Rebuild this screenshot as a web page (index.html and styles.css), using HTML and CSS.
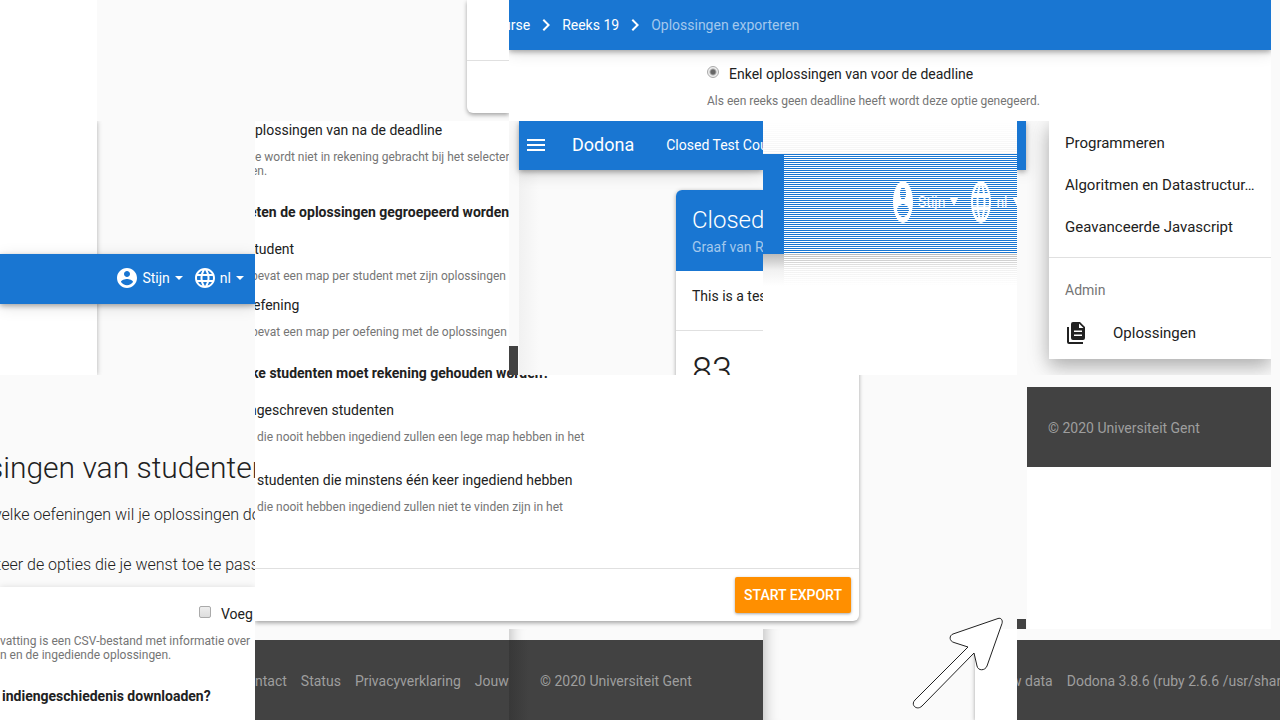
FILE: index.html
```html
<!DOCTYPE html>
<html lang="nl">
<head>
<meta charset="utf-8">
<title>Dodona</title>
<link rel="stylesheet" href="styles.css">
</head>
<body>
<svg class="defs" aria-hidden="true">
  <symbol id="account" viewBox="2 2 20 20"><path d="M12 2C6.48 2 2 6.48 2 12s4.48 10 10 10 10-4.48 10-10S17.52 2 12 2zm0 3c1.66 0 3 1.34 3 3s-1.34 3-3 3-3-1.34-3-3 1.34-3 3-3zm0 14.2c-2.5 0-4.71-1.28-6-3.22.03-1.99 4-3.08 6-3.08 1.99 0 5.97 1.09 6 3.08-1.29 1.94-3.5 3.22-6 3.22z"/></symbol>
  <symbol id="globe" viewBox="2 2 20 20"><path d="M11.99 2C6.47 2 2 6.48 2 12s4.47 10 9.99 10C17.52 22 22 17.52 22 12S17.52 2 11.99 2zm6.93 6h-2.95c-.32-1.25-.78-2.45-1.38-3.56 1.84.63 3.37 1.91 4.33 3.56zM12 4.04c.83 1.2 1.48 2.53 1.91 3.96h-3.82c.43-1.43 1.08-2.76 1.91-3.96zM4.26 14C4.1 13.36 4 12.69 4 12s.1-1.36.26-2h3.38c-.08.66-.14 1.32-.14 2s.06 1.34.14 2H4.26zm.82 2h2.95c.32 1.25.78 2.45 1.38 3.56-1.84-.63-3.37-1.9-4.33-3.56zm2.95-8H5.08c.96-1.66 2.49-2.93 4.33-3.56C8.81 5.55 8.35 6.75 8.03 8zM12 19.96c-.83-1.2-1.48-2.53-1.91-3.96h3.82c-.43 1.43-1.08 2.76-1.91 3.96zM14.34 14H9.66c-.09-.66-.16-1.32-.16-2s.07-1.35.16-2h4.68c.09.65.16 1.32.16 2s-.07 1.34-.16 2zm.25 5.56c.6-1.11 1.06-2.31 1.38-3.56h2.95c-.96 1.65-2.49 2.93-4.33 3.56zM16.36 14c.08-.66.14-1.32.14-2s-.06-1.34-.14-2h3.38c.16.64.26 1.31.26 2s-.1 1.36-.26 2h-3.38z"/></symbol>
  <symbol id="caret" viewBox="0 0 8 4"><path d="M0 0h8L4 4z"/></symbol>
  <symbol id="chevron" viewBox="0 0 24 24"><path d="M8.59 16.58L13.17 12 8.59 7.41 10 6l6 6-6 6z"/></symbol>
</svg>
<main class="board">
  <section class="tile corner">
    <div class="blank-sheet"></div>
    <div class="corner-card"><div></div></div>
  </section>

  <section class="tile deadline">
    <nav class="bar crumbs">
      <a class="cut-wide" href="#">urse</a>
      <svg class="chevron"><use href="#chevron"/></svg>
      <a href="#">Reeks 19</a>
      <svg class="chevron"><use href="#chevron"/></svg>
      <span class="current">Oplossingen exporteren</span>
    </nav>
    <div class="deadline-option">
      <label class="option"><input type="radio" checked>Enkel oplossingen van voor de deadline</label>
      <p class="help">Als een reeks geen deadline heeft wordt deze optie genegeerd.</p>
    </div>
  </section>

  <section class="tile account-tile">
    <div class="sheet"></div>
    <nav class="bar account-bar">
      <button type="button"><svg class="round"><use href="#account"/></svg>Stijn<svg class="caret"><use href="#caret"/></svg></button>
      <button type="button"><svg class="round"><use href="#globe"/></svg>nl<svg class="caret"><use href="#caret"/></svg></button>
    </nav>
  </section>

  <section class="tile export">
    <div class="export-card">
      <div class="choices">
        <p class="label cut-deep">oplossingen van na de deadline</p>
        <p class="help">e wordt niet in rekening gebracht bij het selecteren<br><span class="cut-left">en.</span></p>
        <h2 class="cut-wide">eten de oplossingen gegroepeerd worden?</h2>
        <p class="label cut-deep">student</p>
        <p class="help cut-left">bevat een map per student met zijn oplossingen</p>
        <p class="label cut-slight">efening</p>
        <p class="help cut-left">bevat een map per oefening met de oplossingen</p>
        <h2 class="cut-left">ke studenten moet rekening gehouden worden?</h2>
        <p class="label cut-wide">ngeschreven studenten</p>
        <p class="help tall inset">die nooit hebben ingediend zullen een lege map hebben in het</p>
        <p class="label inset">studenten die minstens één keer ingediend hebben</p>
        <p class="help tall inset">die nooit hebben ingediend zullen niet te vinden zijn in het</p>
      </div>
      <div class="actions"><button type="button" class="start">START EXPORT</button></div>
    </div>
  </section>

  <section class="tile course">
    <div class="gutter"><div class="gutter-foot"></div></div>
    <div class="course-page">
      <header class="bar course-bar">
        <button type="button" aria-label="Menu"><svg class="menu-icon" viewBox="0 0 18 12"><path d="M0 0h18v2H0zM0 5h18v2H0zM0 10h18v2H0z"/></svg></button>
        <a class="brand" href="#">Dodona</a>
        <a href="#">Closed Test Course</a>
      </header>
      <article class="course-card">
        <header><h2>Closed Test Course</h2><p>Graaf van R</p></header>
        <p class="intro">This is a test</p>
        <p class="count">83</p>
      </article>
    </div>
  </section>

  <section class="tile stripes">
    <div class="stripe-fade"></div>
    <div class="stripe-bar">
      <div class="solid"></div>
      <div class="lined">
        <svg class="oval" viewBox="0 0 20 42"><g transform="scale(1 2.1)"><use href="#account" width="20" height="20"/></g></svg>
        <span>Stijn</span>
        <svg class="caret deep" viewBox="0 0 8 8"><path d="M0 0h8L4 8z"/></svg>
        <svg class="oval second" viewBox="0 0 20 42"><g transform="scale(1 2.1)"><use href="#globe" width="20" height="20"/></g></svg>
        <span>nl</span>
        <svg class="caret deep" viewBox="0 0 8 8"><path d="M0 0h8L4 8z"/></svg>
      </div>
    </div>
    <div class="stripe-shade"></div>
  </section>

  <section class="tile drawer">
    <div class="bar stub"></div>
    <div class="drawer-page">
      <nav class="menu">
        <a href="#">Programmeren</a>
        <a href="#">Algoritmen en Datastructur…</a>
        <a href="#">Geavanceerde Javascript</a>
        <h3>Admin</h3>
        <a class="with-icon" href="#"><svg viewBox="0 0 20 22"><path d="M2 5H0v15a2 2 0 0 0 2 2h14v-2H2z"/><path fill-rule="evenodd" d="M6 0h7l5 5v11a2 2 0 0 1-2 2H6a2 2 0 0 1-2-2V2a2 2 0 0 1 2-2zm6 1.500V6h4.500zM7 8.500v1.500h8V8.500zm0 4v1.500h8v-1.500z"/></svg>Oplossingen</a>
      </nav>
    </div>
  </section>

  <section class="tile wizard">
    <h1>singen van studenten</h1>
    <p class="step">velke oefeningen wil je oplossingen downloaden?</p>
    <p class="step">teer de opties die je wenst toe te passen</p>
    <div class="wizard-card">
      <label class="option"><input type="checkbox">Voeg</label>
      <p class="help">vatting is een CSV-bestand met informatie over<br>n en de ingediende oplossingen.</p>
      <h2 class="inset">indiengeschiedenis downloaden?</h2>
    </div>
  </section>

  <section class="tile credits">
    <div class="gutter"><div class="gutter-foot"></div></div>
    <div class="credits-page"><footer class="footer">© 2020 Universiteit Gent</footer></div>
  </section>

  <section class="tile foot-links">
    <footer class="footer"><a href="#">ntact</a><a href="#">Status</a><a href="#">Privacyverklaring</a><a href="#">Jouw</a></footer>
  </section>
  <section class="tile foot-copy shaded"><footer class="footer">© 2020 Universiteit Gent</footer></section>
  <section class="tile foot-blank shaded"><div></div></section>
  <section class="tile foot-version">
    <footer class="footer"><a class="cut-wide" href="#">w data</a><span>Dodona 3.8.6 (ruby 2.6.6 /usr/share)</span></footer>
  </section>

  <svg class="pointer" viewBox="0 0 96 96"><path d="M58 32L44 27.500C39 26 39 20.500 43 19L88 3.500C91 2.500 93 5 92 8.500L77 51C75 56 68 56 67 51L64 38L12 91C7 96 0 90 5 85Z"/></svg>
</main>
</body>
</html>
```
FILE: styles.css
```css
* { box-sizing: border-box; }
body { margin: 0; background: #fafafa; color: #212121; font: 14px/20px Roboto, sans-serif; }
h1, h2, h3, p { margin: 0; }
h2 { font-size: 14px; line-height: 20px; font-weight: 700; }
a { color: inherit; text-decoration: none; }
button { border: 0; padding: 0; background: none; color: inherit; font: inherit; display: flex; align-items: center; }
svg { display: block; flex: none; fill: currentColor; }
.defs { position: absolute; width: 0; height: 0; }

.board {
  position: relative;
  display: grid;
  height: 100vh;
  grid-template-columns: 255fr 254fr 254fr 254fr 254fr 9fr;
  grid-template-rows: 121fr 254fr 254fr 91fr;
  overflow: hidden;
}
.tile { min-width: 0; min-height: 0; overflow: hidden; background: #fafafa; white-space: nowrap; }
.corner { grid-area: 1 / 1 / 2 / 3; }
.deadline { grid-area: 1 / 3 / 2 / 6; }
.account-tile { grid-area: 2 / 1; }
.export { grid-area: 2 / 2 / 4 / 5; }
.course { grid-area: 2 / 3; }
.stripes { grid-area: 2 / 4; }
.drawer { grid-area: 2 / 5; }
.wizard { grid-area: 3 / 1 / 5 / 2; }
.credits { grid-area: 3 / 5; }
.foot-links { grid-area: 4 / 2; }
.foot-copy { grid-area: 4 / 3; }
.foot-blank { grid-area: 4 / 4; }
.foot-version { grid-area: 4 / 5 / 5 / 7; }

/* text that runs off the left edge of its tile */
.cut-slight { margin-left: -2px; }
.cut-left { margin-left: -4px; }
.cut-wide { margin-left: -6px; }
.cut-deep { margin-left: -8px; }
.inset { margin-left: 2px; }

.bar { background: #1976d2; color: #fff; display: flex; align-items: center; height: 50px; box-shadow: 0 2px 5px rgba(0,0,0,.3), 0 3px 16px rgba(0,0,0,.12); }
.label { height: 20px; }
.help { font-size: 12px; line-height: 14px; color: #757575; }
.option { display: flex; align-items: center; gap: 10px; }
.option input { appearance: none; width: 12px; height: 12px; margin: 0 0 4px; border: 1px solid #aaa; border-radius: 2px; background: linear-gradient(#eee, #ddd); }
.option input[type=radio] { border-radius: 50%; background: radial-gradient(circle, #666 0 2px, #eee 4px); }

.corner { display: flex; justify-content: space-between; }
.blank-sheet { width: 97px; background: #fff; }
.corner-card { width: 42px; height: 113px; background: #fff; border-bottom-left-radius: 6px; box-shadow: 0 2px 4px rgba(0,0,0,.35); }
.corner-card div { height: 61px; border-bottom: 1px solid #e0e0e0; }

.deadline { background: #fff; }
.crumbs { gap: 4px; }
.chevron { width: 24px; height: 24px; }
.current { color: #a3c8ed; }
.deadline-option { padding: 14px 0 0 198px; display: grid; gap: 10px; }

.account-tile { display: grid; }
.account-tile > * { grid-area: 1 / 1; }
.sheet { width: 97px; background: #fff; box-shadow: 0 0 5px rgba(0,0,0,.3); }
.account-bar { margin-top: 133px; padding-bottom: 2px; justify-content: flex-end; gap: 12px; padding-right: 11px; z-index: 1; }
.round { width: 20px; height: 20px; margin-right: 5px; }
.caret { width: 8px; height: 4px; margin-left: 5px; }

.export-card { width: 604px; background: #fff; border-bottom-right-radius: 6px; box-shadow: 0 2px 4px rgba(0,0,0,.35); }
.choices { padding-bottom: 40px; margin-top: -1px; border-bottom: 1px solid #e0e0e0; display: flex; flex-direction: column; }
.choices .help { margin-top: 10px; }
.choices .help + .label { margin-top: 12px; }
.choices h2 { margin-top: 24px; }
.choices h2 + .label { margin-top: 17px; }
.choices .tall { min-height: 28px; }
.actions { display: flex; justify-content: flex-end; padding: 8px; }
.start { height: 36px; padding: 0 8px; min-width: 116px; justify-content: center; border-radius: 2px; background: #ff8f00; color: #fff; font-weight: 500; box-shadow: 0 1px 3px rgba(0,0,0,.35); }

.gutter { width: 10px; flex: none; display: flex; align-items: flex-end; padding-right: 1px; }
.gutter-foot { flex: 1; height: 29px; background: #424242; }
.course { display: flex; }
.course-page { flex: 1; min-width: 0; background: linear-gradient(90deg, #f1f1f1, #fafafa 20px); }
.course-bar { height: 49px; padding: 0 0 2px 8px; box-shadow: 0 2px 5px rgba(0,0,0,.3), 0 4px 16px rgba(0,0,0,.15); }
.menu-icon { width: 18px; height: 12px; }
.brand { font-size: 18px; margin: 0 32px 0 27px; }
.course-card { margin: 20px 0 0 157px; min-height: 190px; background: #fff; border-top-left-radius: 6px; box-shadow: 0 1px 4px rgba(0,0,0,.35); }
.course-card header { height: 81px; padding: 15px 16px 0; background: #1976d2; color: #fff; border-top-left-radius: 6px; }
.course-card h2 { font-size: 24px; line-height: 30px; font-weight: 300; }
.course-card header p { line-height: 24px; color: #a3c8ed; }
.intro { padding: 15px 16px 24px; border-bottom: 1px solid #e0e0e0; }
.count { padding: 18px 16px 0; font-size: 36px; line-height: 44px; font-weight: 300; }

.stripes { background: #fff; }
.stripe-fade { height: 33px; background: repeating-linear-gradient(transparent 0 1px, #fff 1px 2px), linear-gradient(#fff, #f4f4f4); }
.stripe-bar { display: flex; height: 100px; }
.solid { flex: none; width: 21px; background: #1976d2; }
.lined { flex: 1; min-width: 0; display: flex; align-items: center; padding: 0 0 4px 109px; color: #fff; background: repeating-linear-gradient(#1976d2 0 1px, #fff 1px 2px); }
.oval { width: 20px; height: 42px; margin-right: 5px; }
.second { margin-left: 13px; }
.deep { height: 8px; }
.stripe-shade { height: 32px; background: repeating-linear-gradient(transparent 0 1px, #fff 1px 2px) 21px 0 no-repeat, linear-gradient(#bbb, #f1f1f1 50%, #fff); }

.drawer { display: flex; }
.stub { flex: none; width: 9px; height: 49px; margin-right: 1px; }
.drawer-page { flex: 1; min-width: 0; padding-left: 22px; overflow: hidden; }
.menu { height: 238px; padding-top: 1px; background: #fff; box-shadow: 0 8px 16px rgba(0,0,0,.2), 0 4px 24px rgba(0,0,0,.15); font-size: 15px; }
.menu a { display: flex; align-items: center; height: 42px; padding-left: 16px; }
.menu h3 { margin-top: 9px; padding: 22px 16px 12px; border-top: 1px solid #e0e0e0; font-size: 14px; font-weight: 400; color: #757575; }
.with-icon { gap: 26px; }
.with-icon svg { width: 20px; height: 22px; margin-left: 2px; }

.wizard h1 { margin: 75px 0 0 -12px; font-size: 30px; line-height: 36px; font-weight: 300; }
.step { margin: 19px 0 30px -6px; font-size: 16px; line-height: 20px; font-weight: 300; }
.step + .step { margin: 0 0 12px -4px; }
.wizard-card { background: #fff; height: 140px; padding-top: 17px; box-shadow: 0 0 6px rgba(0,0,0,.12); }
.wizard-card .option { margin: 0 0 10px 199px; }
.wizard-card h2 { margin-top: 24px; }

.credits { display: flex; }
.credits .gutter-foot { height: 10px; }
.credits-page { flex: 1; margin-top: 12px; background: #fff; }
.footer { height: 80px; display: flex; align-items: center; gap: 14px; padding-top: 2px; background: #424242; color: #9e9e9e; }
.credits .footer { padding-left: 21px; }
.foot-links, .foot-copy, .foot-version { padding-top: 11px; }
.foot-copy .footer { padding-left: 31px; }
.shaded { box-shadow: inset 16px 0 14px -14px rgba(0,0,0,.25); }
.foot-copy .footer { background: linear-gradient(90deg, #383838, #424242 20px); }
.foot-blank div { width: 42px; height: 100%; margin-left: auto; background: #fff; box-shadow: 0 1px 4px rgba(0,0,0,.35); }
.pointer { position: absolute; left: 910px; top: 615px; width: 96px; height: 96px; fill: #fff; stroke: #212121; stroke-width: 1; stroke-linejoin: round; }
```
